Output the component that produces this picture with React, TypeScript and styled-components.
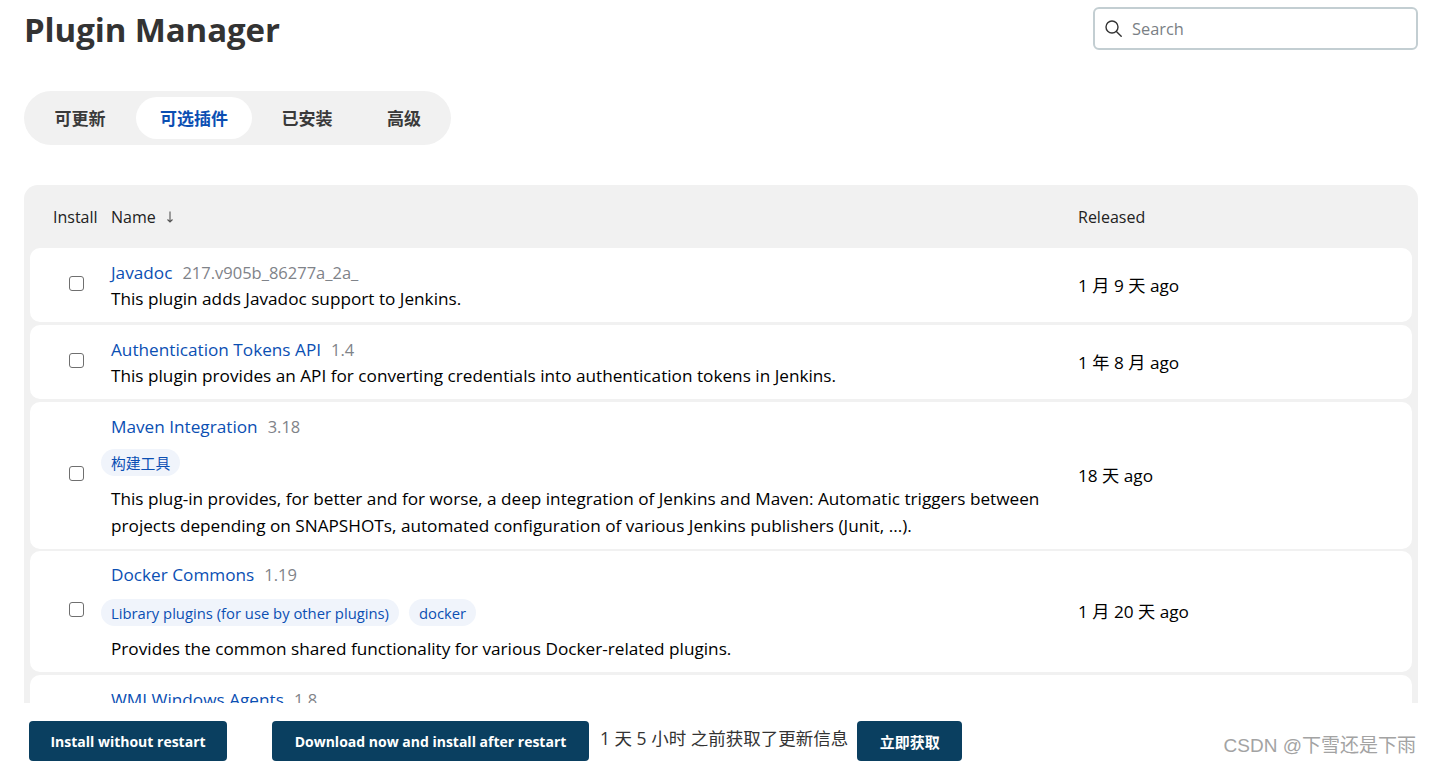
import React from "react";
import styled, { createGlobalStyle } from "styled-components";

const GlobalStyle = createGlobalStyle`
  html, body {
    margin: 0;
    padding: 0;
    height: 100%;
    background: #fff;
    font-family: "Open Sans", "Noto Sans CJK SC", sans-serif;
    color: #14141f;
  }
`;

const Page = styled.div`
  position: relative;
  height: 765px;
  display: flex;
  flex-direction: column;
  overflow: hidden;
`;
const Main = styled.div`
  flex: 1;
  min-height: 0;
  overflow: hidden;
  padding: 0 13px 0 24px;
`;
const Header = styled.div`
  display: flex;
  justify-content: space-between;
  height: 91px;
`;
const Title = styled.h1`
  margin: 8px 0 0;
  font-size: 33px;
  line-height: 44px;
  font-weight: 700;
  color: #333;
  letter-spacing: -0.1px;
`;
const SearchBox = styled.label`
  box-sizing: border-box;
  margin-top: 7px;
  width: 325px;
  height: 43px;
  border: 2px solid #c3ced2;
  border-radius: 6px;
  display: flex;
  align-items: center;
  gap: 10px;
  padding-left: 10px;
  color: #333;
`;
const SearchText = styled.span`
  font-size: 16.4px;
  color: #7a7f85;
`;
const Tabs = styled.div`
  display: inline-flex;
  align-items: center;
  box-sizing: border-box;
  height: 54px;
  width: 427px;
  padding: 6px 0 6px 6px;
  background: #f1f1f1;
  border-radius: 27px;
`;
const Tab = styled.div<{ $active?: boolean; $width: number }>`
  box-sizing: border-box;
  width: ${(p) => p.$width}px;
  height: 42px;
  padding-bottom: 2px;
  display: flex;
  align-items: center;
  justify-content: center;
  font-size: 17px;
  font-weight: 700;
  border-radius: 21px;
  color: ${(p) => (p.$active ? "#0b4fb3" : "#3a3a3a")};
  background: ${(p) => (p.$active ? "#fff" : "transparent")};
  &:first-child {
    padding-right: 6px;
  }
`;
const Panel = styled.div`
  margin-top: 40px;
  background: #f1f1f1;
  border-radius: 14px;
  padding: 0 6px;
`;
const HeadRow = styled.div`
  display: grid;
  grid-template-columns: 81px 967px 1fr;
  height: 63px;
  align-items: center;
  font-size: 16px;
  color: #222;
`;
const InstallHead = styled.div`
  padding-left: 23px;
`;
const NameHead = styled.div`
  display: flex;
  align-items: center;
  gap: 10px;
`;
const Row = styled.div<{ $height: number; $gap: number }>`
  display: grid;
  grid-template-columns: 81px 967px 1fr;
  align-items: center;
  height: ${(p) => p.$height}px;
  margin-bottom: ${(p) => p.$gap}px;
  background: #fff;
  border-radius: 10px;
  font-size: 17.2px;
  color: #000;
`;
const CheckCell = styled.div`
  display: flex;
  justify-content: center;
  padding: 0 0 4px 12px;
  box-sizing: border-box;
`;
const CheckBox = styled.span`
  box-sizing: border-box;
  width: 15px;
  height: 15px;
  border: 1.5px solid #6f6f6f;
  border-radius: 3px;
  background: #fff;
`;
const NameLine = styled.div`
  line-height: 28px;
  margin-bottom: -2px;
`;
const PluginName = styled.a`
  color: #0b4fb3;
  font-weight: 500;
`;
const Version = styled.span`
  margin-left: 10px;
  font-size: 16.5px;
  color: #7f8389;
`;
const Labels = styled.div<{ $top: number }>`
  display: flex;
  gap: 10px;
  margin: ${(p) => p.$top}px 0 9px -10px;
`;
const Label = styled.span`
  display: inline-flex;
  align-items: center;
  height: 27px;
  padding: 0 10px;
  border-radius: 14px;
  background: #f0f4fb;
  color: #0b4fb3;
  font-size: 14.8px;
`;
const Excerpt = styled.div`
  line-height: 27px;
`;
const Released = styled.div`
  padding-bottom: 2px;
`;
const Footer = styled.div`
  flex: none;
  height: 62px;
  background: #fff;
  display: flex;
  align-items: flex-start;
  padding: 18px 0 0 29px;
  box-sizing: border-box;
  color: #333;
`;
const ActionButton = styled.div<{ $width: number; $gap?: number; $size?: number }>`
  box-sizing: border-box;
  width: ${(p) => p.$width}px;
  height: 40px;
  margin-left: ${(p) => p.$gap ?? 0}px;
  display: flex;
  align-items: center;
  justify-content: center;
  background: #0a3f60;
  color: #fff;
  border-radius: 4px;
  font-size: ${(p) => p.$size ?? 14}px;
  font-weight: 700;
`;
const UpdatedText = styled.span`
  margin: 5px 9px 0 11px;
  font-size: 17.5px;
  line-height: 24px;
`;
const Watermark = styled.div`
  position: absolute;
  right: 15px;
  bottom: 8px;
  font-family: "Liberation Sans", "Noto Sans CJK SC", sans-serif;
  font-size: 19px;
  color: #a3a3a3;
`;

const plugins = [
  {
    name: "Javadoc",
    version: "217.v905b_86277a_2a_",
    text: ["This plugin adds Javadoc support to Jenkins."],
    released: "1 月 9 天 ago",
    height: 74,
    gap: 3,
    labelTop: 10,
    labels: [] as string[],
  },
  {
    name: "Authentication Tokens API",
    version: "1.4",
    text: ["This plugin provides an API for converting credentials into authentication tokens in Jenkins."],
    released: "1 年 8 月 ago",
    height: 74,
    gap: 3,
    labelTop: 10,
    labels: [] as string[],
  },
  {
    name: "Maven Integration",
    version: "3.18",
    text: [
      "This plug-in provides, for better and for worse, a deep integration of Jenkins and Maven: Automatic triggers between",
      "projects depending on SNAPSHOTs, automated configuration of various Jenkins publishers (Junit, ...).",
    ],
    released: "18 天 ago",
    height: 147,
    gap: 2,
    labelTop: 10,
    labels: ["构建工具"],
  },
  {
    name: "Docker Commons",
    version: "1.19",
    text: ["Provides the common shared functionality for various Docker-related plugins."],
    released: "1 月 20 天 ago",
    height: 121,
    gap: 3,
    labelTop: 12,
    labels: ["Library plugins (for use by other plugins)", "docker"],
  },
  {
    name: "WMI Windows Agents",
    version: "1.8",
    text: ["Allows you to setup agents on Windows machines over Windows Management Instrumentation."],
    released: "1 年 3 月 ago",
    height: 74,
    gap: 3,
    labelTop: 10,
    labels: [] as string[],
  },
];

function SearchIcon() {
  return (
    <svg width="17" height="17" viewBox="0 0 17 17" fill="none" stroke="currentColor" strokeWidth="1.4" strokeLinecap="round">
      <circle cx="7" cy="7" r="6" />
      <path d="M11.4 11.4l4.8 4.8" />
    </svg>
  );
}

function SortDownIcon() {
  return (
    <svg width="8" height="12" viewBox="0 0 8 12" fill="none" stroke="#555" strokeWidth="1.1">
      <path d="M4 0.5v10.5M1.5 8.5L4 11l2.5-2.5" />
    </svg>
  );
}

export default function App() {
  return (
    <Page>
      <GlobalStyle />
      <Main>
        <Header>
          <Title>Plugin Manager</Title>
          <SearchBox>
            <SearchIcon />
            <SearchText>Search</SearchText>
          </SearchBox>
        </Header>
        <Tabs>
          <Tab $width={106}>可更新</Tab>
          <Tab $width={116} $active>可选插件</Tab>
          <Tab $width={110}>已安装</Tab>
          <Tab $width={84}>高级</Tab>
        </Tabs>
        <Panel>
          <HeadRow>
            <InstallHead>Install</InstallHead>
            <NameHead>
              Name
              <SortDownIcon />
            </NameHead>
            <div>Released</div>
          </HeadRow>
          {plugins.map((plugin) => (
            <Row key={plugin.name} $height={plugin.height} $gap={plugin.gap}>
              <CheckCell>
                <CheckBox />
              </CheckCell>
              <div>
                <NameLine>
                  <PluginName>{plugin.name}</PluginName>
                  <Version>{plugin.version}</Version>
                </NameLine>
                {plugin.labels.length > 0 && (
                  <Labels $top={plugin.labelTop}>
                    {plugin.labels.map((label) => (
                      <Label key={label}>{label}</Label>
                    ))}
                  </Labels>
                )}
                {plugin.text.map((line) => (
                  <Excerpt key={line}>{line}</Excerpt>
                ))}
              </div>
              <Released>{plugin.released}</Released>
            </Row>
          ))}
        </Panel>
      </Main>
      <Footer>
        <ActionButton $width={198}>Install without restart</ActionButton>
        <ActionButton $width={317} $gap={45}>Download now and install after restart</ActionButton>
        <UpdatedText>1 天 5 小时 之前获取了更新信息</UpdatedText>
        <ActionButton $width={105} $size={15}>立即获取</ActionButton>
      </Footer>
      <Watermark>CSDN @下雪还是下雨</Watermark>
    </Page>
  );
}
